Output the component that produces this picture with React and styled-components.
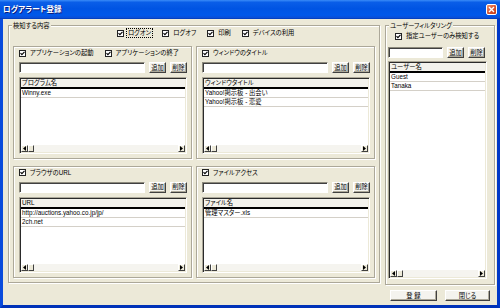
import React from 'react';
import styled, { createGlobalStyle } from 'styled-components';

const FONT = `"Liberation Sans", "Noto Sans CJK JP", sans-serif`;

const GlobalStyle = createGlobalStyle`
  html, body { margin: 0; padding: 0; background: #fff; }
  #root { width: 500px; height: 308px; }
  * { box-sizing: border-box; }
`;

const Window = styled.div`
  width: 500px;
  height: 308px;
  display: flex;
  flex-direction: column;
  font-family: ${FONT};
  font-size: 6.3px;
  color: #000;
  font-feature-settings: "palt";
`;

const TitleBar = styled.div`
  height: 19px;
  flex: none;
  display: flex;
  align-items: center;
  justify-content: space-between;
  padding: 0 3px 0 3px;
  background: linear-gradient(to bottom, #3a8cf8 0%, #0a5ee8 12%, #0054e3 45%, #0058ea 80%, #0a4fd8 92%, #003ab8 100%);
`;

const Title = styled.span`
  color: #fff;
  font-weight: bold;
  font-size: 7.6px;
  line-height: 10px;
  letter-spacing: 0.1px;
  text-shadow: 1px 1px 0 #0a1a7a;
`;

const CloseButton = styled.div`
  width: 11px;
  height: 11px;
  border: 1px solid #fff;
  border-radius: 2px;
  background: linear-gradient(135deg, #f0936f 0%, #d8532e 55%, #c13a18 100%);
  display: flex;
  align-items: center;
  justify-content: center;
`;

const Frame = styled.div`
  flex: 1;
  min-height: 0;
  display: flex;
  border: 3px solid #0846d8;
  border-top: none;
  border-color: #0a4bdc #0038c8 #0032b8 #0a4bdc;
`;

const Body = styled.div`
  flex: 1;
  min-width: 0;
  background: #ece9d8;
  display: grid;
  grid-template-columns: 372px 110px;
  column-gap: 5px;
  padding: 6px 2px 0 5px;
  align-items: start;
`;

const GroupBox = styled.div`
  position: relative;
  height: ${p => p.$h}px;
  min-width: 0;
  border: 1px solid #aca899;
  box-shadow: inset 1px 1px 0 #fff, 1px 1px 0 #fff;
  display: flex;
  flex-direction: column;
  padding: ${p => p.$pad || '0'};
`;

const Legend = styled.span`
  position: absolute;
  top: -4px;
  left: 3px;
  padding: 0 1px;
  background: #ece9d8;
  line-height: 7px;
  white-space: nowrap;
`;

const TopChecks = styled.div`
  height: 14px;
  flex: none;
  display: flex;
  align-items: center;
  gap: 9px;
  padding-left: 108px;
`;

const PanelGrid = styled.div`
  flex: 1;
  display: grid;
  grid-template-columns: minmax(0, 1fr) minmax(0, 1fr);
  grid-template-rows: minmax(0, 1fr) minmax(0, 1fr);
  gap: 7px 4px;
  margin: 6px 4px 4px 4px;
  min-height: 0;
`;

const Panel = styled.div`
  border: 1px solid #aca899;
  box-shadow: inset 1px 1px 0 #fff, 1px 1px 0 #fff;
  padding: 0 4px 4px 5px;
  display: flex;
  flex-direction: column;
  min-height: 0;
  min-width: 0;
`;

const CheckRow = styled.div`
  height: 12px;
  flex: none;
  display: flex;
  align-items: center;
  gap: 9px;
  padding-left: ${p => p.$indent || 0}px;
`;

const CheckItem = styled.label`
  display: inline-flex;
  align-items: center;
  gap: 2px;
  white-space: nowrap;
  line-height: 8px;
`;

const CheckText = styled.span`
  padding: 0 1px;
  border: 1px dotted ${p => (p.$focus ? '#000' : 'transparent')};
`;

const BoxSvg = styled.svg`
  flex: none;
  display: block;
`;

const InputRow = styled.div`
  height: 11px;
  flex: none;
  display: flex;
  gap: 4px;
  margin: ${p => p.$m || '3px 0 0 0'};
`;

const TextBox = styled.input`
  flex: 1;
  min-width: 0;
  width: 0;
  height: 11px;
  padding: 0;
  background: #fff;
  border: 1px solid;
  border-color: #8d8a7c #fff #fff #8d8a7c;
  box-shadow: inset 1px 1px 0 #404040;
  outline: none;
`;

const SmallButton = styled.button`
  width: ${p => p.$w || 17}px;
  height: 11px;
  flex: none;
  padding: 0;
  font-family: ${FONT};
  font-feature-settings: "palt";
  font-size: 6.3px;
  line-height: 8px;
  color: #000;
  background: #f4f3ee;
  border: 1px solid;
  border-color: #fff #404040 #404040 #fff;
  box-shadow: inset -1px -1px 0 #aca899;
  white-space: nowrap;
`;

const ListView = styled.div`
  flex: 1;
  min-height: 0;
  display: flex;
  flex-direction: column;
  background: #fff;
  padding: 1px;
  border: 1px solid;
  border-color: #aca899 #fff #fff #aca899;
  box-shadow: inset 1px 1px 0 #2a2a2a, inset -1px -1px 0 #ece9d8;
  margin: ${p => p.$m || '4px 0 0 0'};
  overflow: hidden;
`;

const ListHeader = styled.div`
  height: 10px;
  flex: none;
  line-height: 8px;
  padding-left: 1px;
  background: #f3f2ec;
  border-bottom: 2px solid #000;
  white-space: nowrap;
`;

const ListRow = styled.div`
  height: 9px;
  flex: none;
  line-height: 8px;
  padding-left: 1px;
  border-bottom: 1px solid #d4d0c8;
  white-space: nowrap;
  overflow: hidden;
`;

const ListFill = styled.div`
  flex: 1;
`;

const HScroll = styled.div`
  height: 7px;
  flex: none;
  display: flex;
  background: #f5f4ef;
`;

const ScrollPart = styled.div`
  width: ${p => p.$w || 7}px;
  height: 7px;
  flex: none;
  background: #ece9d8;
  border: 1px solid;
  border-color: #fff #404040 #404040 #fff;
  display: flex;
  align-items: center;
  justify-content: center;
`;

const Track = styled.div`
  flex: 1;
`;

const RightColumn = styled.div`
  display: flex;
  flex-direction: column;
  min-width: 0;
`;

const FooterButtons = styled.div`
  display: flex;
  gap: 8px;
  margin-top: 5px;
  padding-left: 5px;
`;

const Check = ({ label, focus }) => (
  <CheckItem>
    <BoxSvg width="7" height="7" viewBox="0 0 7 7">
      <rect x="0.5" y="0.5" width="6" height="6" fill="#fff" stroke="#222" />
      <path d="M1.5 3.1 L2.9 4.6 L5.5 1.8" fill="none" stroke="#000" strokeWidth="1.1" />
    </BoxSvg>
    <CheckText $focus={focus}>{label}</CheckText>
  </CheckItem>
);

const Arrow = ({ dir }) => (
  <svg width="3" height="5" viewBox="0 0 3 5">
    {dir === 'left' ? <path d="M3 0 L0 2.5 L3 5 Z" fill="#000" /> : <path d="M0 0 L3 2.5 L0 5 Z" fill="#000" />}
  </svg>
);

const Scrollbar = () => (
  <HScroll>
    <ScrollPart><Arrow dir="left" /></ScrollPart>
    <ScrollPart $w={6} />
    <Track />
    <ScrollPart><Arrow dir="right" /></ScrollPart>
  </HScroll>
);

const List = ({ header, rows, m }) => (
  <ListView $m={m}>
    <ListHeader>{header}</ListHeader>
    {rows.map(r => (
      <ListRow key={r}>{r}</ListRow>
    ))}
    <ListFill />
    <Scrollbar />
  </ListView>
);

const AddRemove = ({ m }) => (
  <InputRow $m={m}>
    <TextBox />
    <SmallButton>追加</SmallButton>
    <SmallButton>削除</SmallButton>
  </InputRow>
);

const panels = [
  { checks: ['アプリケーションの起動', 'アプリケーションの終了'], header: 'プログラム名', rows: ['Winny.exe'] },
  { checks: ['ウィンドウのタイトル'], header: 'ウィンドウタイトル', rows: ['Yahoo!掲示板 - 出会い', 'Yahoo!掲示板 - 恋愛'] },
  { checks: ['ブラウザのURL'], header: 'URL', rows: ['http://auctions.yahoo.co.jp/jp/', '2ch.net'] },
  { checks: ['ファイルアクセス'], header: 'ファイル名', rows: ['管理マスター.xls'] },
];

export default function App() {
  return (
    <>
      <GlobalStyle />
      <Window>
        <TitleBar>
          <Title>ログアラート登録</Title>
          <CloseButton>
            <svg width="7" height="7" viewBox="0 0 7 7">
              <path d="M1 1 L6 6 M6 1 L1 6" stroke="#fff" strokeWidth="1.4" />
            </svg>
          </CloseButton>
        </TitleBar>
        <Frame>
          <Body>
            <GroupBox $h={258}>
              <Legend>検知する内容</Legend>
              <TopChecks>
                <Check label="ログオン" focus />
                <Check label="ログオフ" />
                <Check label="印刷" />
                <Check label="デバイスの利用" />
              </TopChecks>
              <PanelGrid>
                {panels.map(p => (
                  <Panel key={p.header}>
                    <CheckRow>
                      {p.checks.map(c => (
                        <Check key={c} label={c} />
                      ))}
                    </CheckRow>
                    <AddRemove />
                    <List header={p.header} rows={p.rows} />
                  </Panel>
                ))}
              </PanelGrid>
            </GroupBox>
            <RightColumn>
              <GroupBox $h={260} $pad="4px 0 5px 0">
                <Legend>ユーザーフィルタリング</Legend>
                <CheckRow $indent={9}>
                  <Check label="指定ユーザーのみ検知する" />
                </CheckRow>
                <AddRemove m="5px 9px 0 2px" />
                <List header="ユーザー名" rows={['Guest', 'Tanaka']} m="3px 7px 0 2px" />
              </GroupBox>
              <FooterButtons>
                <SmallButton $w={47}>登 録</SmallButton>
                <SmallButton $w={45}>閉じる</SmallButton>
              </FooterButtons>
            </RightColumn>
          </Body>
        </Frame>
      </Window>
    </>
  );
}
